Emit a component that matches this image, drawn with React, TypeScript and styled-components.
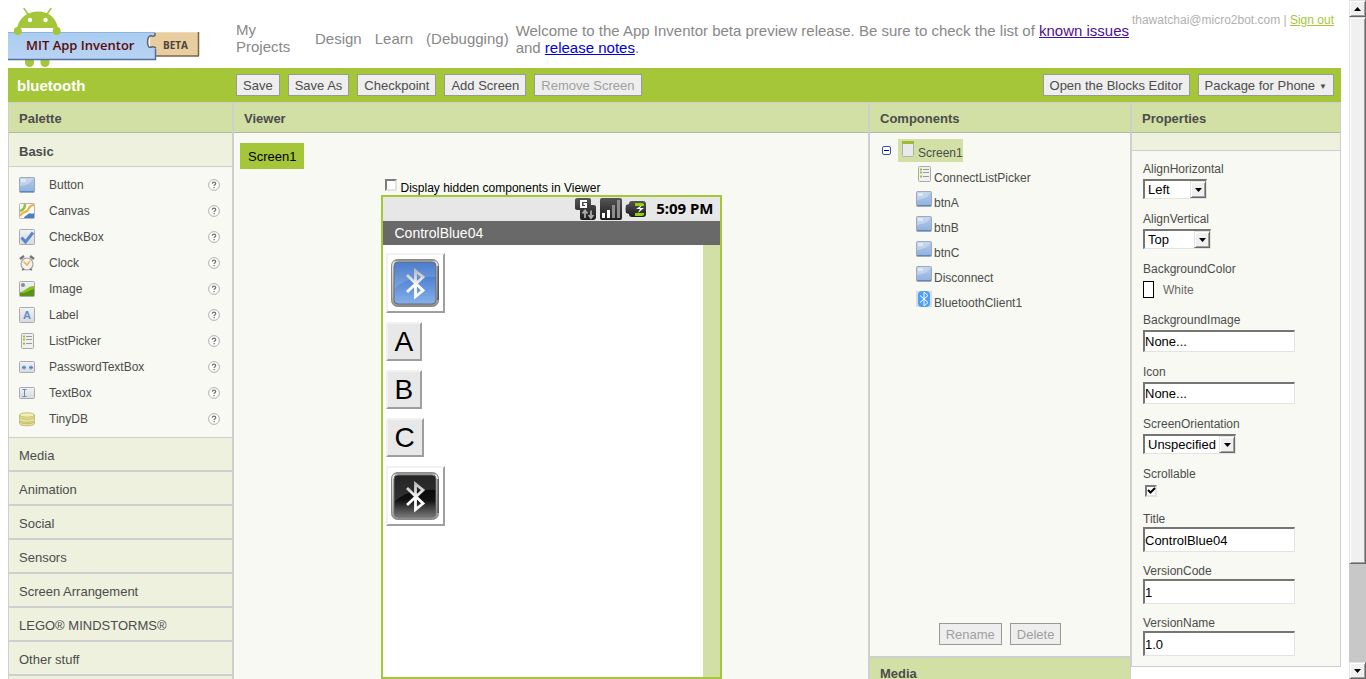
import React from "react";
import styled, { createGlobalStyle, css } from "styled-components";

const GlobalStyle = createGlobalStyle`
  * { box-sizing: border-box; }
  html, body { margin: 0; padding: 0; background: #fff; }
  body, button, input, select {
    font-family: "Liberation Sans", Arial, sans-serif;
  }
  ul { list-style: none; margin: 0; padding: 0; }
  h1, h2, h3, p { margin: 0; }
  svg { display: block; flex: none; }
`;

const green = "#a5c639";
const paleGreen = "#d2e0a6";
const sectionBg = "#edf1de";
const panelBg = "#f7f9f2";
const rule = "#cfcfcf";
const ink = "#4c4c4c";

/* ---------- shell ---------- */

const Shell = styled.div`
  display: flex;
  height: 100vh;
  overflow: hidden;
`;

const Page = styled.div`
  flex: 1;
  min-width: 0;
  display: flex;
  flex-direction: column;
  padding: 0 8px;
`;

const ScrollBar = styled.div`
  width: 17px;
  flex: none;
  display: flex;
  flex-direction: column;
  background: #c8c8c8;
`;

const raised = css`
  background: #f0f0f0;
  border: 1px solid;
  border-color: #e3e3e3 #696969 #696969 #e3e3e3;
  box-shadow: inset 1px 1px 0 #fff, inset -1px -1px 0 #a0a0a0;
`;

const ScrollButton = styled.button`
  ${raised}
  height: 17px;
  flex: none;
  padding: 0;
  display: flex;
  align-items: center;
  justify-content: center;
`;

const ScrollThumb = styled.div`
  ${raised}
  flex: 547;
`;

const ScrollRest = styled.div`
  flex: 98;
`;

/* ---------- header ---------- */

const Header = styled.header`
  display: flex;
  height: 68px;
  flex: none;
  color: #888;
  font-size: 15px;
  line-height: 17px;
`;

const Brand = styled.div`
  width: 228px;
  flex: none;
`;

const Nav = styled.nav`
  display: flex;
  flex: none;
  align-items: center;
  gap: 13px;
  padding-top: 8px;
  margin-right: 7px;
`;

const NavLink = styled.a<{ $wide?: boolean }>`
  color: inherit;
  text-decoration: none;
  width: ${(p) => (p.$wide ? "66px" : "auto")};
`;

const Notice = styled.p`
  flex: 1;
  padding-top: 22px;
`;

const NoticeLink = styled.a<{ $visited?: boolean }>`
  color: ${(p) => (p.$visited ? "#4b0f93" : "#0000e0")};
`;

const Account = styled.div`
  flex: none;
  padding: 12px 7px 0 0;
  font-size: 12px;
  line-height: 16px;
  color: #b0b0b0;
`;

const SignOut = styled.a`
  color: ${green};
`;

/* ---------- toolbar ---------- */

const Toolbar = styled.div`
  display: flex;
  align-items: center;
  gap: 8px;
  height: 34px;
  flex: none;
  padding: 0 7px 0 9px;
  background: ${green};
`;

const ProjectName = styled.h1`
  width: 211px;
  padding-top: 2px;
  color: #fff;
  font-size: 15px;
  line-height: 18px;
`;

const Spacer = styled.div`
  flex: 1;
`;

const PushButton = styled.button`
  height: 22px;
  padding: 1px 6px 0;
  border: 1px solid #999;
  background: #eee;
  color: ${ink};
  font-size: 13px;
  line-height: 19px;
  white-space: nowrap;
  &:disabled {
    color: #a0a0a0;
  }
`;

const Caret = styled.span`
  font-size: 8px;
  margin-left: 4px;
  vertical-align: 1px;
`;

/* ---------- panels ---------- */

const Workspace = styled.main`
  flex: 1;
  min-height: 0;
  display: grid;
  grid-template-columns: 225px minmax(0, 1fr) 262px 210px;
`;

const Panel = styled.section`
  border: 1px solid ${rule};
  background: ${panelBg};
  color: ${ink};
  font-size: 12px;
`;

const PropertiesPanel = styled(Panel)`
  align-self: start;
`;

const PanelTitle = styled.h2`
  height: 30px;
  padding-left: 10px;
  border-bottom: 1px solid #b3b8a4;
  background: ${paleGreen};
  font-size: 13px;
  line-height: 32px;
`;

const MediaTitle = styled(PanelTitle)`
  border-top: 2px solid ${rule};
  height: 32px;
`;

/* ---------- palette ---------- */

const OpenSection = styled.h3`
  height: 34px;
  padding: 2px 0 0 10px;
  border-bottom: 1px solid ${rule};
  background: ${sectionBg};
  font-size: 13px;
  line-height: 34px;
`;

const PaletteList = styled.ul`
  padding: 5px 12px 5px 10px;
  border-bottom: 1px solid ${rule};
`;

const PaletteRow = styled.li`
  display: flex;
  align-items: center;
  height: 26px;
  gap: 14px;
`;

const PaletteName = styled.span`
  flex: 1;
`;

const HelpButton = styled.button`
  padding: 0;
  border: 0;
  background: none;
`;

const Section = styled.h3`
  height: 34px;
  padding-left: 10px;
  border-bottom: 2px solid ${rule};
  background: ${sectionBg};
  font-size: 13px;
  font-weight: 400;
  line-height: 36px;
`;

const PalettePanel = styled(Panel)`
  background: ${sectionBg};
`;

const PaletteBody = styled.div`
  background: ${panelBg};
`;

/* ---------- viewer ---------- */

const ScreenTab = styled.button`
  display: block;
  height: 26px;
  margin: 10px 0 10px 6px;
  padding: 0 8px;
  border: 0;
  background: ${green};
  color: #000;
  font-size: 13px;
`;

const Stage = styled.div`
  width: 341px;
  margin: 0 auto;
`;

const HiddenToggle = styled.label`
  display: flex;
  gap: 4px;
  height: 16px;
  padding-left: 4px;
  color: #000;
  line-height: 18px;
`;

const TickWrap = styled.span`
  position: relative;
  width: 12px;
  height: 12px;
`;

const Tick = styled.input`
  appearance: none;
  display: block;
  width: 12px;
  height: 12px;
  margin: 0;
  background: #fff;
  border: 2px solid;
  border-color: #7c7c7c #e3e3e3 #e3e3e3 #7c7c7c;
  & + svg {
    display: none;
    position: absolute;
    inset: 0;
    pointer-events: none;
  }
  &:checked + svg {
    display: block;
  }
`;

const Phone = styled.div`
  border: 2px solid ${green};
  background: #fff;
`;

const StatusBar = styled.div`
  display: flex;
  justify-content: flex-end;
  align-items: center;
  gap: 3px;
  height: 24px;
  padding-right: 6px;
  background: #e7e7e7;
`;

const ClockText = styled.span`
  margin-left: 6px;
  padding-bottom: 3px;
  color: #000;
  font: 700 15px/20px "Noto Sans", sans-serif;
`;

const PhoneTitle = styled.div`
  height: 24px;
  padding-left: 12px;
  background: #696969;
  color: #fff;
  font-size: 14px;
  line-height: 24px;
`;

const PhoneScreen = styled.div`
  display: flex;
  flex-direction: column;
  align-items: flex-start;
  gap: 9px;
  height: 432px;
  padding: 8px 0 0 3px;
  border-right: 17px solid ${paleGreen};
`;

const PhoneButton = styled.button<{ $image?: boolean }>`
  height: ${(p) => (p.$image ? "60px" : "39px")};
  padding: ${(p) => (p.$image ? "0 4px 0 3px" : "0 7px")};
  border: 2px solid;
  border-color: #f2f2f2 #9f9f9f #9f9f9f #f2f2f2;
  background: ${(p) => (p.$image ? "#fff" : "#e8e8e8")};
  color: #000;
  font-size: 28px;
  line-height: 35px;
`;

/* ---------- component tree ---------- */

const TreeArea = styled.div`
  display: flex;
  flex-direction: column;
  min-height: 523px;
  padding: 6px 0 11px 12px;
`;

const TreeRoot = styled.div`
  display: flex;
  align-items: center;
  gap: 7px;
`;

const Toggle = styled.button`
  padding: 0;
  border: 0;
  background: none;
`;

const TreeNode = styled.div<{ $selected?: boolean }>`
  display: flex;
  align-items: flex-start;
  gap: 2px;
  height: 23px;
  padding: 2px 0 0 2px;
  background: ${(p) => (p.$selected ? paleGreen : "transparent")};
`;

const NodeName = styled.span`
  padding-top: 4px;
  line-height: 16px;
`;

const TreeChildren = styled.ul`
  display: grid;
  gap: 2px;
  padding: 2px 0 0 32px;
`;

const TreeActions = styled.div`
  display: flex;
  justify-content: center;
  gap: 8px;
  margin-top: auto;
  padding-right: 12px;
`;

/* ---------- properties ---------- */

const PropertyType = styled.div`
  height: 18px;
  border-bottom: 1px solid ${rule};
  background: ${sectionBg};
`;

const PropertyList = styled.div`
  display: grid;
  gap: 12px;
  padding: 10px 11px 11px;
`;

const Property = styled.div<{ $tight?: boolean }>`
  display: grid;
  justify-items: start;
  gap: ${(p) => (p.$tight ? "0" : "2px")};
`;

const PropertyLabel = styled.label`
  line-height: 16px;
`;

const sunken = css`
  border: solid;
  border-width: 2px 1px 1px 2px;
  border-color: #757575 #e3e3e3 #e3e3e3 #757575;
  background: #fff;
  color: #000;
  font-size: 13px;
`;

const TextBox = styled.input<{ $tall?: boolean }>`
  ${sunken}
  width: 152px;
  height: ${(p) => (p.$tall ? "25px" : "22px")};
  margin-bottom: ${(p) => (p.$tall ? "-1px" : "0")};
  padding: ${(p) => (p.$tall ? "1px 0 0" : "0")};
`;

const SelectWrap = styled.span`
  position: relative;
  display: flex;
`;

const Select = styled.select<{ $width: number }>`
  ${sunken}
  appearance: none;
  width: ${(p) => p.$width}px;
  height: 20px;
  padding: 0 17px 0 3px;
  border-radius: 0;
`;

const SelectArrow = styled.span`
  ${raised}
  position: absolute;
  top: 2px;
  right: 1px;
  bottom: 1px;
  width: 16px;
  display: flex;
  align-items: center;
  justify-content: center;
  pointer-events: none;
`;

const ColorButton = styled.button`
  display: flex;
  align-items: center;
  gap: 9px;
  height: 21px;
  padding: 0;
  border: 0;
  background: none;
  color: #6b6b6b;
  font-size: 12px;
`;

const Swatch = styled.span`
  width: 11px;
  height: 17px;
  border: 1px solid #000;
  background: #fff;
`;

const ScrollableTick = styled.div`
  height: 15px;
  padding: 1px 0 0 2px;
`;

/* ---------- drawings ---------- */

const Logo = () => (
  <svg width="192" height="68" viewBox="0 0 192 68" role="img" aria-label="MIT App Inventor beta">
    <defs>
      <linearGradient id="lgBlue" x1="0" y1="0" x2="0" y2="1">
        <stop offset="0" stopColor="#a9cdf0" />
        <stop offset="1" stopColor="#b9d3f3" />
      </linearGradient>
    </defs>
    <g fill={green}>
      <path d="M9 28C11 18 19 11.500 30 11.500S48 18 50 28z" />
      <path d="M16 8.500l5 7M43 8.500l-5 7" stroke={green} strokeWidth="1.500" strokeLinecap="round" />
      <rect x="17" y="54" width="9" height="13" rx="4.500" />
      <rect x="32.500" y="54" width="9" height="13" rx="4.500" />
    </g>
    <circle cx="22" cy="20" r="2.200" fill="#fff" />
    <circle cx="37.500" cy="20" r="2.200" fill="#fff" />
    <path d="M142 32h49v24h-49z" fill="#e8cda0" />
    <path d="M148 32.500h42" stroke="#f0dab4" />
    <path d="M190.500 32v24M148 56h43" fill="none" stroke="#7a6548" strokeWidth="1.500" />
    <path
      d="M0 32h147v3c-1 3-3 0-5 1-3 1-3 9-1 11 2 1 4-1 5 0l2 1v12H0z"
      fill="url(#lgBlue)"
    />
    <path d="M0 32.500h147" stroke="#8fb4dc" />
    <path d="M0 59.500h147.500V49" fill="none" stroke="#4f719f" strokeWidth="1.500" />
    <path d="M147 33v2c-1 3-3 0-5 1-3 1-3 9-1 11 2 1 4-1 5 0l2 1" fill="none" stroke="#5f6468" strokeWidth="1.500" />
    <circle cx="9.800" cy="31" r="4" fill={green} />
    <circle cx="48.700" cy="31" r="4" fill={green} />
    <text x="18" y="50" fill="#5b0a0a" fontFamily="Open Sans, sans-serif" fontWeight="600" fontSize="13">
      MIT App Inventor
    </text>
    <text x="155" y="49" fill="#4b4338" fontFamily="Open Sans, sans-serif" fontWeight="700" fontSize="10">
      BETA
    </text>
  </svg>
);

const DefsSvg = styled.svg`
  position: absolute;
`;

const Defs = () => (
  <DefsSvg width="0" height="0" aria-hidden="true">
    <defs>
      <linearGradient id="btnBlue" x1="0" y1="0" x2="0" y2="1">
        <stop offset="0" stopColor="#b4cbe8" />
        <stop offset="1" stopColor="#8fb0dd" />
      </linearGradient>
      <linearGradient id="tile" x1="0" y1="0" x2="0" y2="1">
        <stop offset="0" stopColor="#f1f2f4" />
        <stop offset="1" stopColor="#d6d9df" />
      </linearGradient>
      <linearGradient id="frame" x1="0" y1="0" x2="0" y2="1">
        <stop offset="0" stopColor="#6a6a6a" />
        <stop offset="0.060" stopColor="#e4e4e4" />
        <stop offset="0.800" stopColor="#b5b5b5" />
        <stop offset="1" stopColor="#8a8a8a" />
      </linearGradient>
      <linearGradient id="faceBlue" x1="0" y1="0" x2="0" y2="1">
        <stop offset="0" stopColor="#2f68c4" />
        <stop offset="1" stopColor="#86b0ec" />
      </linearGradient>
      <linearGradient id="faceBlack" x1="0" y1="0" x2="0" y2="1">
        <stop offset="0" stopColor="#000" />
        <stop offset="0.600" stopColor="#111" />
        <stop offset="1" stopColor="#777" />
      </linearGradient>
      <linearGradient id="glyph" x1="0" y1="0" x2="0" y2="1">
        <stop offset="0" stopColor="#bdbdbd" />
        <stop offset="0.600" stopColor="#fff" />
      </linearGradient>
      <linearGradient id="dark" x1="0" y1="0" x2="0" y2="1">
        <stop offset="0" stopColor="#555" />
        <stop offset="1" stopColor="#1c1c1c" />
      </linearGradient>
    </defs>
  </DefsSvg>
);

type IconKind =
  | "button" | "canvas" | "check" | "clock" | "image" | "label"
  | "list" | "password" | "text" | "db" | "screen" | "bluetooth";

const Tile = () => <rect x="0.500" y="0.500" width="15" height="15" rx="1" fill="url(#tile)" stroke="#a9abb0" />;

const iconShapes: Record<IconKind, React.ReactNode> = {
  button: (
    <>
      <rect x="0.500" y="0.500" width="15" height="15" rx="1" fill="url(#btnBlue)" stroke="#9fa9b8" />
      <path d="M1 1h13c-1 5-5 7-13 8z" fill="#cfdef2" opacity="0.600" />
      <path d="M2 2h5v3H2z" fill="#e4eefa" opacity="0.800" />
      <path d="M1 14h14v1H1z" fill="#5f86c0" />
    </>
  ),
  canvas: (
    <>
      <rect x="0.500" y="0.500" width="15" height="15" rx="1" fill="#fbfbf6" stroke="#b5b5b5" />
      <path d="M6 1c0 4-1 6-5 7" fill="none" stroke="#8cc63f" strokeWidth="2.500" />
      <path d="M15 2c-6 0-4 4-7 6s-5 1-7 5" fill="none" stroke="#f5b043" strokeWidth="2.200" />
      <path d="M5 15c1-3 3-2 4-4 2-2 4 1 6-1v5z" fill="#4d7fc4" />
    </>
  ),
  check: (
    <>
      <Tile />
      <path d="M2.500 8.500l4 4.500L14 3.500" fill="none" stroke="#5b86c6" strokeWidth="3" />
    </>
  ),
  clock: (
    <>
      <path d="M1 4l4-3M15 4l-4-3" stroke="#777" strokeWidth="2.500" />
      <circle cx="8" cy="9" r="6" fill="#f4f4f4" stroke="#a5a5a5" strokeWidth="1.200" />
      <path d="M4.500 6.500L8 10l3-4" fill="none" stroke="#f0b050" strokeWidth="1.500" />
      <path d="M3 15l2-1M13 15l-2-1" stroke="#777" strokeWidth="1.500" />
    </>
  ),
  image: (
    <>
      <Tile />
      <circle cx="4" cy="4" r="2" fill="#8a8a8a" />
      <path d="M1 11c5 0 7-6 14-6v10H1z" fill="#8cc21f" />
      <path d="M1 12c5 1 9-3 14-4v7H1z" fill="#5b9414" />
    </>
  ),
  label: (
    <>
      <Tile />
      <text x="8" y="12" textAnchor="middle" fill="#5f8dce" fontFamily="Liberation Sans, sans-serif" fontWeight="700" fontSize="11">A</text>
    </>
  ),
  list: (
    <>
      <rect x="2.500" y="0.500" width="12" height="15" rx="1" fill="#f0f1ee" stroke="#a9a9a9" />
      <path d="M4 3.500h2M4 6.500h2M4 10.500h2" stroke="#9bc22e" strokeWidth="2" />
      <path d="M7 3.500h6M7 6.500h6M7 10.500h6" stroke="#9a9a9a" />
    </>
  ),
  password: (
    <>
      <rect x="0.500" y="2.500" width="15" height="11" rx="1" fill="url(#tile)" stroke="#a9abb0" />
      <path d="M3 8.500h4M5 6.500v4M3.600 7l2.800 3M6.400 7l-2.800 3M10 8.500h4M12 6.500v4M10.600 7l2.800 3M13.400 7l-2.800 3" stroke="#5288cc" />
    </>
  ),
  text: (
    <>
      <rect x="0.500" y="2.500" width="15" height="11" rx="1" fill="url(#tile)" stroke="#a9abb0" />
      <path d="M3.500 4.500h4M3.500 11.500h4M5.500 4.500v7" stroke="#6d89b8" />
    </>
  ),
  db: (
    <g fill="#eae498" stroke="#b9b26a" strokeWidth="0.800">
      <path d="M0.500 10v2.500c0 3 15 3 15 0V10" />
      <ellipse cx="8" cy="10.500" rx="7.500" ry="2.200" />
      <path d="M0.500 6.500V9c0 3 15 3 15 0V6.500" />
      <path d="M0.500 4v2c0 3 15 3 15 0V4" />
      <ellipse cx="8" cy="4" rx="7.500" ry="2.200" fill="#f3eeb4" />
    </g>
  ),
  screen: (
    <>
      <rect x="2.500" y="0.500" width="11" height="15" rx="1" fill="#e9e9e9" stroke="#b0b0b0" />
      <path d="M2 0h12v3H2z" fill="#9dbb38" />
    </>
  ),
  bluetooth: (
    <>
      <path d="M0 0h16v16H0z" fill="#dcdcdc" />
      <rect x="2" y="0" width="12" height="16" rx="4" fill="#4ba0f8" />
      <path d="M4 4.500l8 7-4 3.500V1l4 3.500-8 7" fill="none" stroke="#fff" />
    </>
  ),
};

const Icon = ({ kind }: { kind: IconKind }) => (
  <svg width="16" height="16" viewBox="0 0 16 16" aria-hidden="true">{iconShapes[kind]}</svg>
);

const HelpIcon = () => (
  <svg width="12" height="12" viewBox="0 0 12 12" aria-hidden="true">
    <circle cx="6" cy="6" r="5.400" fill="#fdfdfb" stroke="#b0b0b0" />
    <path d="M4.300 4.700c0-2 3.400-2 3.400 0 0 1.200-1.600 1-1.600 2.300M6.100 8v1.200" fill="none" stroke="#6f6f6f" strokeWidth="1.200" />
  </svg>
);

const Arrow = ({ up }: { up?: boolean }) => (
  <svg width="7" height="4" viewBox="0 0 7 4" aria-hidden="true">
    <path d={up ? "M0 4h7L3.500 0z" : "M0 0h7L3.500 4z"} fill="#000" />
  </svg>
);

const BluetoothPicture = ({ face }: { face: "faceBlue" | "faceBlack" }) => (
  <svg width="48" height="48" viewBox="0 0 48 48" aria-hidden="true">
    <rect x="0.500" y="0.500" width="47" height="47" rx="6" fill="url(#frame)" stroke="#8a8a8a" />
    <path d="M47 7v34" stroke="#333" />
    <rect x="3" y="3" width="42" height="42" rx="4" fill={`url(#${face})`} stroke="#6c6c6c" />
    <path d="M3.500 30C10 22 26 17 44.500 18V7q0-3.500-3.500-3.500H7Q3.500 3.500 3.500 7z" fill="#fff" opacity="0.140" />
    <path d="M16 16l16 15.500L24.500 37.500V12L32 18 16 33" fill="none" stroke="url(#glyph)" strokeWidth="2.800" />
  </svg>
);

const NetworkIcon = () => (
  <svg width="22" height="22" viewBox="0 0 22 22" aria-hidden="true">
    <path d="M3 0h11q2 0 2 2v5h3q2 0 2 2v10q0 3-3 3H7q-2 0-2-2v-8H3q-3 0-3-2V2q0-2 3-2z" fill="url(#dark)" />
    <path d="M12 3H6v6h5V6H8.500" fill="none" stroke="#fff" strokeWidth="2" />
    <path d="M10 20v-6M7.500 15.500L10 12.500l2.500 3M16 12.500v6M13.500 17l2.500 3 2.500-3" fill="none" stroke="#aaa" strokeWidth="1.800" />
  </svg>
);

const SignalIcon = () => (
  <svg width="22" height="22" viewBox="0 0 22 22" aria-hidden="true">
    <rect width="22" height="22" rx="2" fill="url(#dark)" />
    <path d="M2 15h3v5H2zM7 12h3v8H7z" fill="#fff" />
    <path d="M12 7h3v13h-3zM17 2h3v18h-3z" fill="#8d8d8d" />
  </svg>
);

const BatteryIcon = () => (
  <svg width="22" height="22" viewBox="0 0 22 22" aria-hidden="true">
    <path d="M7 3h11q3 0 3 3v10q0 3-3 3H7q-3 0-3-3l-3-1q-1-4 0-8l3-1q0-3 3-3z" fill="url(#dark)" />
    <path d="M10 5h7l2 1v2h-9zM10 15h9v2l-2 1h-7z" fill="#8fd400" />
    <path d="M17 7l-6 4h4l-2 4 6-5h-4z" fill="#fff" />
  </svg>
);

const TickMark = () => (
  <svg width="12" height="12" viewBox="0 0 12 12" aria-hidden="true">
    <path d="M3 5l2.500 2.500L10 3" fill="none" stroke="#000" strokeWidth="2" />
  </svg>
);

/* ---------- data ---------- */

const paletteItems: [IconKind, string][] = [
  ["button", "Button"],
  ["canvas", "Canvas"],
  ["check", "CheckBox"],
  ["clock", "Clock"],
  ["image", "Image"],
  ["label", "Label"],
  ["list", "ListPicker"],
  ["password", "PasswordTextBox"],
  ["text", "TextBox"],
  ["db", "TinyDB"],
];

const sections = ["Media", "Animation", "Social", "Sensors", "Screen Arrangement", "LEGO® MINDSTORMS®", "Other stuff"];

const treeItems: [IconKind, string][] = [
  ["list", "ConnectListPicker"],
  ["button", "btnA"],
  ["button", "btnB"],
  ["button", "btnC"],
  ["button", "Disconnect"],
  ["bluetooth", "BluetoothClient1"],
];

const SelectProperty = ({ name, value, width }: { name: string; value: string; width: number }) => (
  <Property>
    <PropertyLabel htmlFor={name}>{name}</PropertyLabel>
    <SelectWrap>
      <Select id={name} defaultValue={value} $width={width}>
        <option>{value}</option>
      </Select>
      <SelectArrow><Arrow /></SelectArrow>
    </SelectWrap>
  </Property>
);

const TextProperty = ({ name, value, tall }: { name: string; value: string; tall?: boolean }) => (
  <Property $tight={tall}>
    <PropertyLabel htmlFor={name}>{name}</PropertyLabel>
    <TextBox id={name} type="text" defaultValue={value} $tall={tall} />
  </Property>
);

export default function App() {
  return (
    <Shell>
      <GlobalStyle />
      <Defs />
      <Page>
        <Header>
          <Brand><Logo /></Brand>
          <Nav>
            <NavLink href="#projects" $wide>My Projects</NavLink>
            <NavLink href="#design">Design</NavLink>
            <NavLink href="#learn">Learn</NavLink>
            <NavLink href="#debugging">(Debugging)</NavLink>
          </Nav>
          <Notice>
            Welcome to the App Inventor beta preview release. Be sure to check the list of{" "}
            <NoticeLink href="#issues" $visited>known issues</NoticeLink> and{" "}
            <NoticeLink href="#notes">release notes</NoticeLink>.
          </Notice>
          <Account>
            thawatchai@micro2bot.com | <SignOut href="#signout">Sign out</SignOut>
          </Account>
        </Header>

        <Toolbar>
          <ProjectName>bluetooth</ProjectName>
          <PushButton>Save</PushButton>
          <PushButton>Save As</PushButton>
          <PushButton>Checkpoint</PushButton>
          <PushButton>Add Screen</PushButton>
          <PushButton disabled>Remove Screen</PushButton>
          <Spacer />
          <PushButton>Open the Blocks Editor</PushButton>
          <PushButton>Package for Phone<Caret>▼</Caret></PushButton>
        </Toolbar>

        <Workspace>
          <PalettePanel>
            <PanelTitle>Palette</PanelTitle>
            <PaletteBody>
              <OpenSection>Basic</OpenSection>
              <PaletteList>
                {paletteItems.map(([kind, name]) => (
                  <PaletteRow key={name}>
                    <Icon kind={kind} />
                    <PaletteName>{name}</PaletteName>
                    <HelpButton aria-label={`Help for ${name}`}><HelpIcon /></HelpButton>
                  </PaletteRow>
                ))}
              </PaletteList>
            </PaletteBody>
            {sections.map((name) => <Section key={name}>{name}</Section>)}
          </PalettePanel>

          <Panel>
            <PanelTitle>Viewer</PanelTitle>
            <ScreenTab>Screen1</ScreenTab>
            <Stage>
              <HiddenToggle>
                <TickWrap><Tick type="checkbox" /><TickMark /></TickWrap>
                Display hidden components in Viewer
              </HiddenToggle>
              <Phone>
                <StatusBar>
                  <NetworkIcon />
                  <SignalIcon />
                  <BatteryIcon />
                  <ClockText>5:09 PM</ClockText>
                </StatusBar>
                <PhoneTitle>ControlBlue04</PhoneTitle>
                <PhoneScreen>
                  <PhoneButton $image aria-label="Connect"><BluetoothPicture face="faceBlue" /></PhoneButton>
                  <PhoneButton>A</PhoneButton>
                  <PhoneButton>B</PhoneButton>
                  <PhoneButton>C</PhoneButton>
                  <PhoneButton $image aria-label="Disconnect"><BluetoothPicture face="faceBlack" /></PhoneButton>
                </PhoneScreen>
              </Phone>
            </Stage>
          </Panel>

          <Panel>
            <PanelTitle>Components</PanelTitle>
            <TreeArea>
              <TreeRoot>
                <Toggle aria-label="Collapse Screen1">
                  <svg width="9" height="9" viewBox="0 0 9 9" aria-hidden="true">
                    <rect x="0.500" y="0.500" width="8" height="8" rx="1.500" fill="#fff" stroke="#3c50b4" />
                    <path d="M2 4.500h5" stroke="#0000c8" />
                  </svg>
                </Toggle>
                <TreeNode $selected><Icon kind="screen" /><NodeName>Screen1</NodeName></TreeNode>
              </TreeRoot>
              <TreeChildren>
                {treeItems.map(([kind, name]) => (
                  <li key={name}>
                    <TreeNode><Icon kind={kind} /><NodeName>{name}</NodeName></TreeNode>
                  </li>
                ))}
              </TreeChildren>
              <TreeActions>
                <PushButton disabled>Rename</PushButton>
                <PushButton disabled>Delete</PushButton>
              </TreeActions>
            </TreeArea>
            <MediaTitle>Media</MediaTitle>
          </Panel>

          <PropertiesPanel>
            <PanelTitle>Properties</PanelTitle>
            <PropertyType />
            <PropertyList>
              <SelectProperty name="AlignHorizontal" value="Left" width={64} />
              <SelectProperty name="AlignVertical" value="Top" width={68} />
              <Property>
                <PropertyLabel as="span">BackgroundColor</PropertyLabel>
                <ColorButton aria-label="BackgroundColor: White"><Swatch />White</ColorButton>
              </Property>
              <TextProperty name="BackgroundImage" value="None..." />
              <TextProperty name="Icon" value="None..." />
              <SelectProperty name="ScreenOrientation" value="Unspecified" width={93} />
              <Property>
                <PropertyLabel htmlFor="Scrollable">Scrollable</PropertyLabel>
                <ScrollableTick>
                  <TickWrap><Tick id="Scrollable" type="checkbox" defaultChecked /><TickMark /></TickWrap>
                </ScrollableTick>
              </Property>
              <TextProperty name="Title" value="ControlBlue04" tall />
              <TextProperty name="VersionCode" value="1" tall />
              <TextProperty name="VersionName" value="1.0" tall />
            </PropertyList>
          </PropertiesPanel>
        </Workspace>
      </Page>
      <ScrollBar>
        <ScrollButton aria-label="Scroll up"><Arrow up /></ScrollButton>
        <ScrollThumb />
        <ScrollRest />
        <ScrollButton aria-label="Scroll down"><Arrow /></ScrollButton>
      </ScrollBar>
    </Shell>
  );
}
